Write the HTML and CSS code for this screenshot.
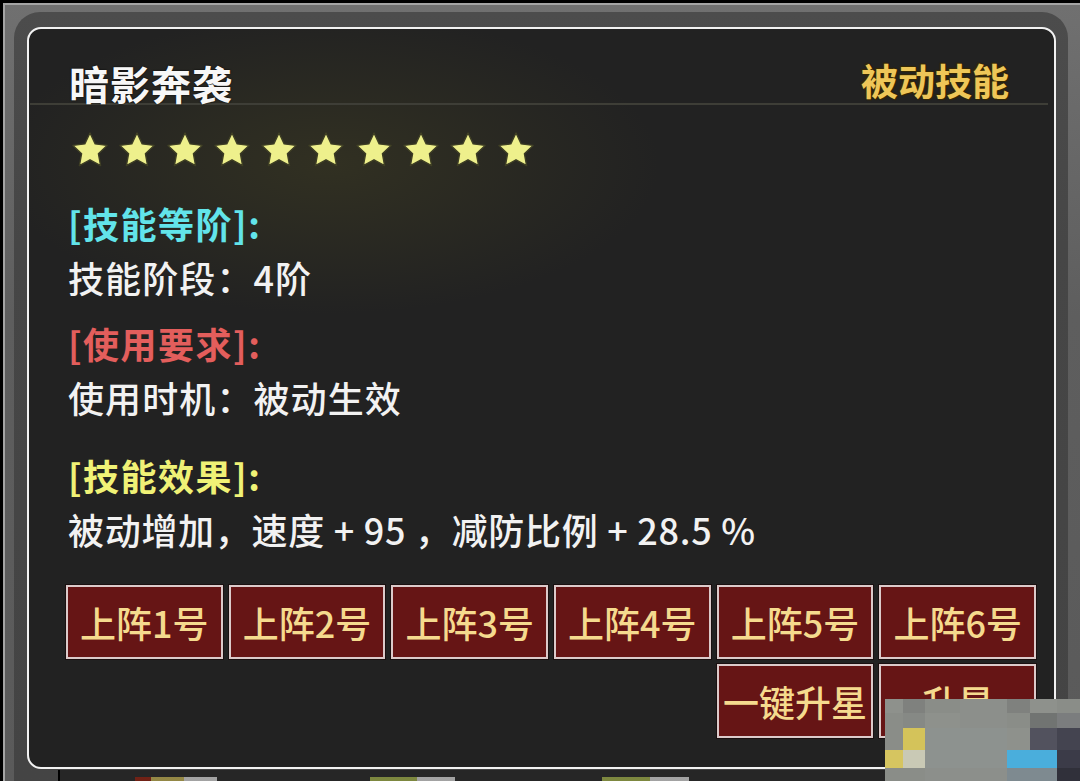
FILE: index.html
```html
<!DOCTYPE html>
<html lang="zh-CN">
<head>
<meta charset="utf-8">
<title>暗影奔袭</title>
<link rel="stylesheet" href="styles.css">
</head>
<body>
<div class="screen">
  <svg class="defs" width="0" height="0" aria-hidden="true">
    <defs>
      <symbol id="star" viewBox="-1 -1 38 36">
        <polygon points="18,0 23.2,10.9 35.1,12.4 26.4,20.7 28.6,32.6 18,26.8 7.4,32.6 9.6,20.7 0.9,12.4 12.8,10.9" fill="#eef08c" stroke="#3e3e24" stroke-width="1.4" stroke-linejoin="round"/>
      </symbol>
    </defs>
  </svg>
  <div class="frame">
    <div class="bezel">
      <div class="panel">
        <div class="header">
          <div class="title">暗影奔袭</div>
          <div class="kind">被动技能</div>
        </div>
        <div class="stars">
          <svg class="star"><use href="#star"/></svg>
          <svg class="star"><use href="#star"/></svg>
          <svg class="star"><use href="#star"/></svg>
          <svg class="star"><use href="#star"/></svg>
          <svg class="star"><use href="#star"/></svg>
          <svg class="star"><use href="#star"/></svg>
          <svg class="star"><use href="#star"/></svg>
          <svg class="star"><use href="#star"/></svg>
          <svg class="star"><use href="#star"/></svg>
          <svg class="star"><use href="#star"/></svg>
        </div>
        <div class="section first">
          <div class="label cyan">[技能等阶]:</div>
          <div class="value">技能阶段：4阶</div>
        </div>
        <div class="section second">
          <div class="label red">[使用要求]:</div>
          <div class="value">使用时机：被动生效</div>
        </div>
        <div class="section third">
          <div class="label yellow">[技能效果]:</div>
          <div class="value effect">被动增加，速度 + 95 ，减防比例 + 28.5 %</div>
        </div>
        <div class="buttons">
          <div class="btn">上阵1号</div>
          <div class="btn">上阵2号</div>
          <div class="btn">上阵3号</div>
          <div class="btn">上阵4号</div>
          <div class="btn">上阵5号</div>
          <div class="btn">上阵6号</div>
          <div class="btn col5">一键升星</div>
          <div class="btn col6">升星</div>
        </div>
      </div>
      <div class="below">
        <span class="blip b1"></span>
        <span class="blip b2"></span>
        <span class="blip b3"></span>
      </div>
    </div>
  </div>
  <div class="mosaic">
    <i class="c1"></i><i class="c2"></i><i class="c3"></i><i class="c4"></i><i class="c2"></i><i class="c1"></i><i class="c3"></i>
    <i class="c3"></i><i class="c5"></i><i class="c1"></i><i class="c4"></i><i class="c3"></i><i class="c6"></i><i class="c7"></i>
    <i class="c3"></i><i class="y1"></i><i class="c8"></i><i class="c8"></i><i class="c1"></i><i class="d1"></i><i class="d2"></i>
    <i class="y2"></i><i class="l1"></i><i class="c8"></i><i class="c8"></i><i class="bl"></i><i class="bl"></i><i class="d3"></i>
    <i class="c3"></i><i class="c3"></i><i class="c4"></i><i class="c4"></i><i class="c9"></i><i class="c9"></i><i class="d4"></i>
  </div>
</div>
</body>
</html>
```
FILE: styles.css
```css
html, body {
  margin: 0;
  padding: 0;
  background: #000;
}

.screen {
  position: relative;
  width: 1080px;
  height: 781px;
  overflow: hidden;
  background: #000;
  padding: 3px 0 0 3px;
  box-sizing: border-box;
  font-family: "Noto Sans CJK SC", "Noto Sans", sans-serif;
}

.defs {
  position: absolute;
  width: 0;
  height: 0;
}

.frame {
  height: 100%;
  box-sizing: border-box;
  background: linear-gradient(#707070, #5e5e5e 40%, #5a5a5a);
  border-top: 2px solid #a4a4a4;
  border-left: 2px solid #a4a4a4;
  padding: 7px 12px 0 9px;
}

.bezel {
  height: 100%;
  box-sizing: border-box;
  background: linear-gradient(#4c4c4c, #464646 30%, #444);
  border-radius: 26px 26px 0 0;
  padding: 15px 12px 0 13px;
  display: flex;
  flex-direction: column;
}

.panel {
  flex: none;
  height: 742px;
  box-sizing: border-box;
  border: 2px solid #f2f2f2;
  border-radius: 14px;
  background:
    radial-gradient(ellipse 330px 150px at 300px 135px, rgba(62, 60, 34, 0.55), rgba(40, 40, 30, 0) 100%),
    #222222;
  display: flex;
  flex-direction: column;
}

.header {
  height: 76px;
  box-sizing: border-box;
  margin: 0 6px 0 1px;
  padding: 0 39px 0 39px;
  border-bottom: 2px solid #3e3e37;
  display: flex;
  justify-content: space-between;
  align-items: flex-end;
}

.title {
  font-size: 40px;
  line-height: 40px;
  letter-spacing: 1px;
  color: #f7f7f7;
  font-weight: 700;
  text-shadow: 0 0 2px #000;
}

.kind {
  font-size: 37px;
  line-height: 37px;
  margin-bottom: 4px;
  color: #eec658;
  font-weight: 700;
  text-shadow: 0 0 1px #3a2a00, 1px 1px 1px #3a2a00, -1px -1px 1px #3a2a00;
}

.stars {
  margin: 27px 0 0 42px;
  height: 36px;
  display: flex;
  gap: 9.3px;
}

.star {
  width: 38px;
  height: 36px;
}

.section {
  margin-left: 39px;
  font-size: 36px;
  line-height: 54px;
}

.section.first { margin-top: 28px; }
.section.second { margin-top: 12px; }
.section.third { margin-top: 24px; }

.label {
  letter-spacing: 1.5px;
  font-weight: 700;
}

.cyan { color: #62e4ea; }
.red { color: #e35e5c; }
.yellow { color: #f0f276; }

.value {
  color: #f2f2f2;
  letter-spacing: 1.1px;
  font-weight: 500;
}

.value.effect {
  letter-spacing: 0.7px;
}

.buttons {
  margin: 29px 0 0 37px;
  width: 970px;
  display: grid;
  grid-template-columns: repeat(6, 1fr);
  grid-auto-rows: 74px;
  column-gap: 6px;
  row-gap: 5px;
}

.btn {
  box-sizing: border-box;
  background: #661515;
  border: 2px solid #dccaca;
  box-shadow: 0 0 0 1px #1a1010;
  color: #f5da8e;
  font-size: 36px;
  font-weight: 500;
  display: flex;
  align-items: center;
  justify-content: center;
  white-space: nowrap;
}

.btn.col5 { grid-column: 5; }
.btn.col6 { grid-column: 6; }

.below {
  flex: 1;
  margin-left: 31px;
  margin-top: 1px;
  border-left: 2px solid #000;
  background: #262626;
  position: relative;
}

.blip {
  position: absolute;
  bottom: 0;
  height: 4px;
  opacity: 0.75;
}

.b1 {
  left: 75px;
  width: 82px;
  background: linear-gradient(90deg, #8a2010 0 20%, #b8a850 20% 60%, #cccccc 60% 100%);
}

.b2 {
  left: 310px;
  width: 85px;
  background: linear-gradient(90deg, #9aa848 0 55%, #cccccc 55% 100%);
}

.b3 {
  left: 542px;
  width: 87px;
  background: linear-gradient(90deg, #9aa848 0 55%, #cccccc 55% 100%);
}

.mosaic {
  position: absolute;
  left: 885px;
  top: 699px;
  width: 195px;
  height: 82px;
  display: grid;
  grid-template-columns: 18px 22px 35px 47px 23px 27px 23px;
  grid-template-rows: 14px 15px 22px 18px 13px;
}

.mosaic i { display: block; }
.mosaic .c1 { background: #8e918c; }
.mosaic .c2 { background: #7f817e; }
.mosaic .c3 { background: #8a8d88; }
.mosaic .c4 { background: #8c8f8b; }
.mosaic .c5 { background: #868985; }
.mosaic .c6 { background: #717472; }
.mosaic .c7 { background: #7b7d7e; }
.mosaic .c8 { background: #8d928f; }
.mosaic .c9 { background: #7e8a90; }
.mosaic .y1 { background: #d4c35a; }
.mosaic .y2 { background: #d6c560; }
.mosaic .l1 { background: #c9c9b5; }
.mosaic .bl { background: #4aaedc; }
.mosaic .d1 { background: #52525e; }
.mosaic .d2 { background: #444450; }
.mosaic .d3 { background: #3b3b48; }
.mosaic .d4 { background: #30303a; }
```
